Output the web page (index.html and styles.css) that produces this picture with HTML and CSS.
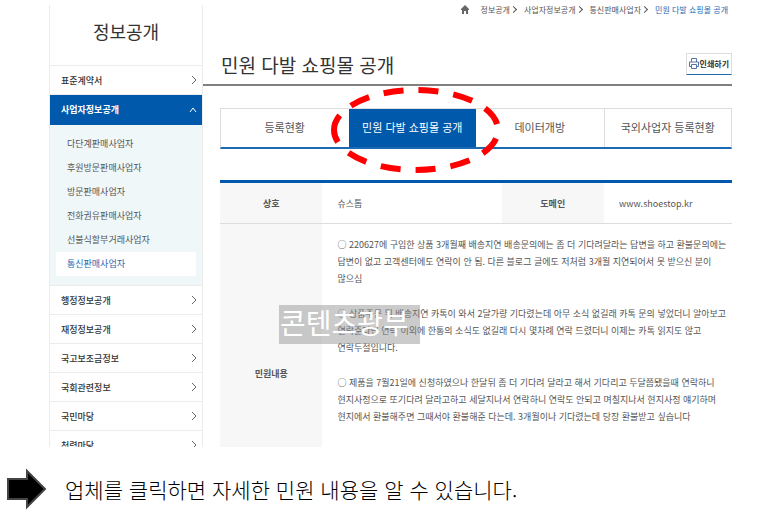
FILE: index.html
```html
<!DOCTYPE html>
<html lang="ko">
<head>
<meta charset="utf-8">
<title>민원 다발 쇼핑몰 공개</title>
<link rel="stylesheet" href="styles.css">
</head>
<body>
<div class="site">
  <aside class="side">
    <h2 class="side-title">정보공개</h2>
    <nav>
      <ul class="menu">
        <li><a class="menu-link" href="#">표준계약서<svg class="chev" viewBox="0 0 6 10"><path d="M1 1l4 4-4 4"/></svg></a></li>
        <li>
          <a class="menu-link open" href="#">사업자정보공개<svg class="chev up" viewBox="0 0 8 6"><path d="M1 5l3-4 3 4"/></svg></a>
          <ul class="submenu">
            <li><a href="#">다단계판매사업자</a></li>
            <li><a href="#">후원방문판매사업자</a></li>
            <li><a href="#">방문판매사업자</a></li>
            <li><a href="#">전화권유판매사업자</a></li>
            <li><a href="#">선불식할부거래사업자</a></li>
            <li><a class="current" href="#">통신판매사업자</a></li>
          </ul>
        </li>
        <li><a class="menu-link" href="#">행정정보공개<svg class="chev" viewBox="0 0 6 10"><path d="M1 1l4 4-4 4"/></svg></a></li>
        <li><a class="menu-link" href="#">재정정보공개<svg class="chev" viewBox="0 0 6 10"><path d="M1 1l4 4-4 4"/></svg></a></li>
        <li><a class="menu-link" href="#">국고보조금정보<svg class="chev" viewBox="0 0 6 10"><path d="M1 1l4 4-4 4"/></svg></a></li>
        <li><a class="menu-link" href="#">국회관련정보<svg class="chev" viewBox="0 0 6 10"><path d="M1 1l4 4-4 4"/></svg></a></li>
        <li><a class="menu-link" href="#">국민마당<svg class="chev" viewBox="0 0 6 10"><path d="M1 1l4 4-4 4"/></svg></a></li>
        <li><a class="menu-link" href="#">청렴마당<svg class="chev" viewBox="0 0 6 10"><path d="M1 1l4 4-4 4"/></svg></a></li>
      </ul>
    </nav>
  </aside>

  <main class="main">
    <nav class="crumbs">
      <a class="home" href="#" aria-label="홈"><svg viewBox="0 0 8 9"><path d="M4 0L0 4v1h1v4h2V6h2v3h2V5h1V4z"/></svg></a>
      <a href="#">정보공개</a>
      <a href="#">사업자정보공개</a>
      <a href="#">통신판매사업자</a>
      <a class="here" href="#">민원 다발 쇼핑몰 공개</a>
    </nav>

    <header class="heading">
      <h1>민원 다발 쇼핑몰 공개</h1>
      <button class="print" type="button">
        <svg viewBox="0 0 10 11"><path d="M2.5 4V.5h5V4M2 8.500H.5V4h9v4.500H8M2.500 6.500h5v4h-5z"/></svg>인쇄하기
      </button>
    </header>

    <div class="content">
      <ul class="tabs">
        <li><a href="#">등록현황</a></li>
        <li class="on"><a href="#">민원 다발 쇼핑몰 공개</a>
          <svg class="ring" viewBox="0 0 170 86"><path d="M3 43A82 40 0 0 1 167 43A82 40 0 0 1 3 43"/></svg>
        </li>
        <li><a href="#">데이터개방</a></li>
        <li><a href="#">국외사업자 등록현황</a></li>
      </ul>

      <div class="detail">
        <table>
          <colgroup><col class="c-label"><col class="c-name"><col class="c-label"><col class="c-domain"></colgroup>
          <tbody>
            <tr class="info">
              <th scope="row">상호</th><td>슈스톱</td>
              <th scope="row">도메인</th><td>www.shoestop.kr</td>
            </tr>
            <tr class="complaint">
              <th scope="row">민원내용</th>
              <td colspan="3">
                <p>○ 220627에 구입한 상품 3개월째 배송지연 배송문의에는 좀 더 기다려달라는 답변을 하고 환불문의에는<br>답변이 없고 고객센터에도 연락이 안 됨. 다른 블로그 글에도 저처럼 3개월 지연되어서 못 받으신 분이<br>많으심</p>
                <p>○ 상품주문 뒤 배송지연 카톡이 와서 2달가량 기다렸는데 아무 소식 없길래 카톡 문의 넣었더니 알아보고<br>연락준다던 연락 이외에 한통의 소식도 없길래 다시 몇차례 연락 드렸더니 이제는 카톡 읽지도 않고<br>연락두절입니다.</p>
                <p>○ 제품을 7월21일에 신청하였으나 한달뒤 좀 더 기다려 달라고 해서 기다리고 두달쯤됐을때 연락하니<br>현지사정으로 또기다려 달라고하고 세달지나서 연락하니 연락도 안되고 며칠지나서 현지사정 얘기하며<br>현지에서 환불해주면 그때서야 환불해준 다는데. 3개월이나 기다렸는데 당장 환불받고 싶습니다</p>
              </td>
            </tr>
          </tbody>
        </table>
        <span class="watermark">콘텐츠광부</span>
      </div>
    </div>
  </main>
</div>

<footer class="caption">
  <svg class="arrow" viewBox="0 0 40 42"><path d="M1 11H20V3L38 21 20 39V31H1z"/></svg>
  <p>업체를 클릭하면 자세한 민원 내용을 알 수 있습니다.</p>
</footer>
</body>
</html>
```
FILE: styles.css
```css
* { box-sizing: border-box; }

body {
  margin: 0;
  height: 100vh;
  display: grid;
  grid-template-rows: minmax(0, 1fr) 65px;
  background: #fff;
  color: #555;
  font-family: "Noto Sans CJK KR", sans-serif;
  font-size: 9px;
  line-height: 17px;
}

h1, h2, p, ul { margin: 0; padding: 0; }
ul { list-style: none; }
a { color: inherit; text-decoration: none; }
svg { display: block; fill: none; }

.site {
  display: flex;
  overflow: hidden;
  padding: 0 26px 0 49px;
}

/* Side menu */
.side {
  flex: 0 0 154px;
  margin-top: 5px;
  border: solid #ececec;
  border-width: 0 1px;
}

.side-title {
  height: 61px;
  padding-top: 12px;
  border-bottom: 1px solid #ececec;
  color: #333;
  font-size: 18px;
  font-weight: 400;
  line-height: 28px;
  text-align: center;
}

.menu-link {
  display: flex;
  align-items: center;
  justify-content: space-between;
  height: 29px;
  padding: 0 5px 0 11px;
  border-bottom: 1px solid #ececec;
  color: #333;
  font-weight: 500;
}

.menu-link.open {
  height: 30px;
  border-color: #0059aa;
  background: #0059aa;
  color: #fff;
  font-weight: 700;
}

.chev {
  width: 6px;
  height: 10px;
  stroke: #666;
}

.chev.up {
  width: 8px;
  height: 6px;
  stroke: #fff;
}

.submenu {
  padding: 7px 6px 9px;
  border-bottom: 1px solid #ececec;
  background: #eff7f9;
}

.submenu a {
  display: block;
  padding-left: 11px;
  border-radius: 2px;
  line-height: 24px;
}

.submenu .current {
  background: #fff;
  color: #1c69b4;
}

/* Main column */
.main { flex: 1; min-width: 0; }

.crumbs {
  display: flex;
  justify-content: flex-end;
  gap: 8px;
  padding: 1px 4px 0 0;
  font-size: 8px;
}

.crumbs a { display: flex; align-items: center; }

.crumbs a:not(.home):not(.here)::after {
  content: "";
  width: 4px;
  height: 4px;
  margin-left: 1px;
  border: solid #555;
  border-width: 1px 1px 0 0;
  transform: rotate(45deg);
}

.home { margin-right: 4px; }
.home svg { width: 8px; height: 9px; fill: #666; }
.crumbs .here { color: #1c69b4; }

.heading {
  display: flex;
  align-items: center;
  justify-content: space-between;
  height: 68px;
  padding: 27px 0 0 18px;
  border-bottom: 2px solid #808080;
}

.heading h1 {
  color: #333;
  font-size: 19px;
  font-weight: 400;
  line-height: 28px;
}

.print {
  display: flex;
  align-items: center;
  gap: 1px;
  height: 22px;
  margin-bottom: 2px;
  padding: 0 2px;
  border: 1px solid #ddd;
  border-bottom-color: #1c69b4;
  background: #fff;
  color: #333;
  font: 700 8px "Noto Sans CJK KR", sans-serif;
}

.print svg { width: 10px; height: 11px; stroke: #5574a5; }

.content { padding: 22px 0 0 17px; }

.tabs {
  display: grid;
  grid-template-columns: repeat(4, 1fr);
  height: 41px;
  border: 1px solid #ddd;
  border-bottom: 2px solid #1c69b4;
  font-size: 11px;
}

.tabs li { position: relative; }
.tabs li + li + li + li { border-left: 1px solid #ddd; }

.tabs a {
  display: block;
  height: 100%;
  line-height: 36px;
  text-align: center;
}

.tabs .on a {
  background: #0059aa;
  color: #fff;
}

.ring {
  position: absolute;
  z-index: 1;
  top: -22px;
  left: -18px;
  width: 170px;
  height: 86px;
  pointer-events: none;
}

.ring path {
  stroke: #f00;
  stroke-width: 6;
  stroke-dasharray: 20 15;
  stroke-dashoffset: 4;
}

/* Complaint detail */
.detail { position: relative; margin-top: 31px; }

table {
  width: 100%;
  table-layout: fixed;
  border-collapse: collapse;
  border-top: 3px solid #0059aa;
}

.c-label { width: 20%; }
.c-name { width: 35%; }
.c-domain { width: 25%; }

.info { height: 42px; border-bottom: 1px solid #ddd; }
.complaint { height: 300px; }

th {
  padding: 0;
  background: #f7f7f7;
  font-weight: 700;
  text-align: center;
}

td { padding: 0 0 0 15px; }

.complaint td {
  padding-top: 12px;
  vertical-align: top;
  white-space: nowrap;
}

.complaint p + p { margin-top: 18px; }

.watermark {
  position: absolute;
  top: 125px;
  left: 59px;
  width: 141px;
  height: 39px;
  padding-left: 1px;
  background: rgba(140, 140, 140, .45);
  color: #fff;
  font-size: 28px;
  line-height: 34px;
}

/* Caption below the capture */
.caption {
  display: flex;
  align-items: center;
  gap: 18px;
  padding: 18px 0 0 7px;
  color: #000;
  font-size: 21px;
  font-weight: 300;
  line-height: 28px;
}

.arrow {
  flex: none;
  width: 40px;
  height: 42px;
  fill: #000;
  stroke: #444;
  stroke-width: 2;
}
```
